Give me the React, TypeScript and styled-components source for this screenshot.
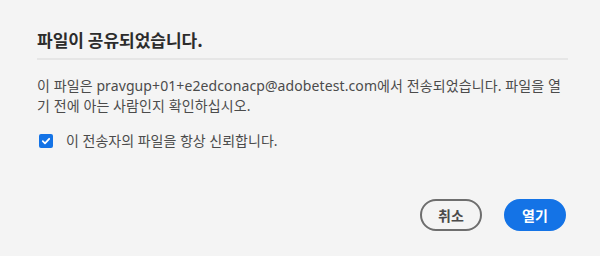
import React from "react";
import styled, { createGlobalStyle } from "styled-components";

const GlobalStyle = createGlobalStyle`
  html, body {
    margin: 0;
    padding: 0;
    background: #f4f4f4;
  }
  body {
    font-family: "Noto Sans", "Noto Sans CJK KR", sans-serif;
  }
`;

const Dialog = styled.div`
  width: 600px;
  height: 256px;
  box-sizing: border-box;
  background: #f4f4f4;
  padding: 29px 32px 0 37px;
  display: flex;
  flex-direction: column;
`;

const Title = styled.h1`
  margin: 0;
  font-family: "Noto Sans CJK KR", sans-serif;
  font-size: 17px;
  font-weight: 700;
  line-height: 22px;
  color: #2c2c2c;
`;

const Divider = styled.hr`
  margin: 7px 0 0;
  border: none;
  height: 2px;
  background: #e6e6e6;
`;

const Body = styled.p`
  margin: 16px 6px 0 0;
  font-size: 14px;
  line-height: 20px;
  letter-spacing: 0.1px;
  color: #4b4b4b;
`;

const CheckRow = styled.label`
  display: flex;
  align-items: center;
  gap: 13px;
  margin: 15px 0 0 2px;
  font-size: 14px;
  line-height: 20px;
  color: #4b4b4b;
`;

const Box = styled.span`
  width: 14px;
  height: 14px;
  border-radius: 2px;
  background: #1473e6;
  display: flex;
  align-items: center;
  justify-content: center;
`;

const Footer = styled.div`
  margin-top: auto;
  margin-bottom: 25px;
  display: flex;
  justify-content: flex-end;
  gap: 22px;
  padding-right: 2px;
`;

const Button = styled.button<{ primary?: boolean }>`
  height: 32px;
  min-width: 62px;
  box-sizing: border-box;
  padding: 0 14px;
  border-radius: 16px;
  font-family: "Noto Sans CJK KR", sans-serif;
  font-size: 14px;
  font-weight: 700;
  cursor: pointer;
  border: 2px solid ${({ primary }) => (primary ? "#1473e6" : "#6e6e6e")};
  background: ${({ primary }) => (primary ? "#1473e6" : "transparent")};
  color: ${({ primary }) => (primary ? "#ffffff" : "#4b4b4b")};
`;

export default function App() {
  return (
    <>
      <GlobalStyle />
      <Dialog>
        <Title>파일이 공유되었습니다.</Title>
        <Divider />
        <Body>
          이 파일은 pravgup+01+e2edconacp@adobetest.com에서 전송되었습니다. 파일을 열기 전에 아는 사람인지 확인하십시오.
        </Body>
        <CheckRow>
          <Box>
            <svg width="10" height="10" viewBox="0 0 10 10">
              <path d="M1.8 5.2 L4 7.3 L8.2 2.8" fill="none" stroke="#fff" strokeWidth="1.8" strokeLinecap="round" strokeLinejoin="round" />
            </svg>
          </Box>
          이 전송자의 파일을 항상 신뢰합니다.
        </CheckRow>
        <Footer>
          <Button>취소</Button>
          <Button primary>열기</Button>
        </Footer>
      </Dialog>
    </>
  );
}
